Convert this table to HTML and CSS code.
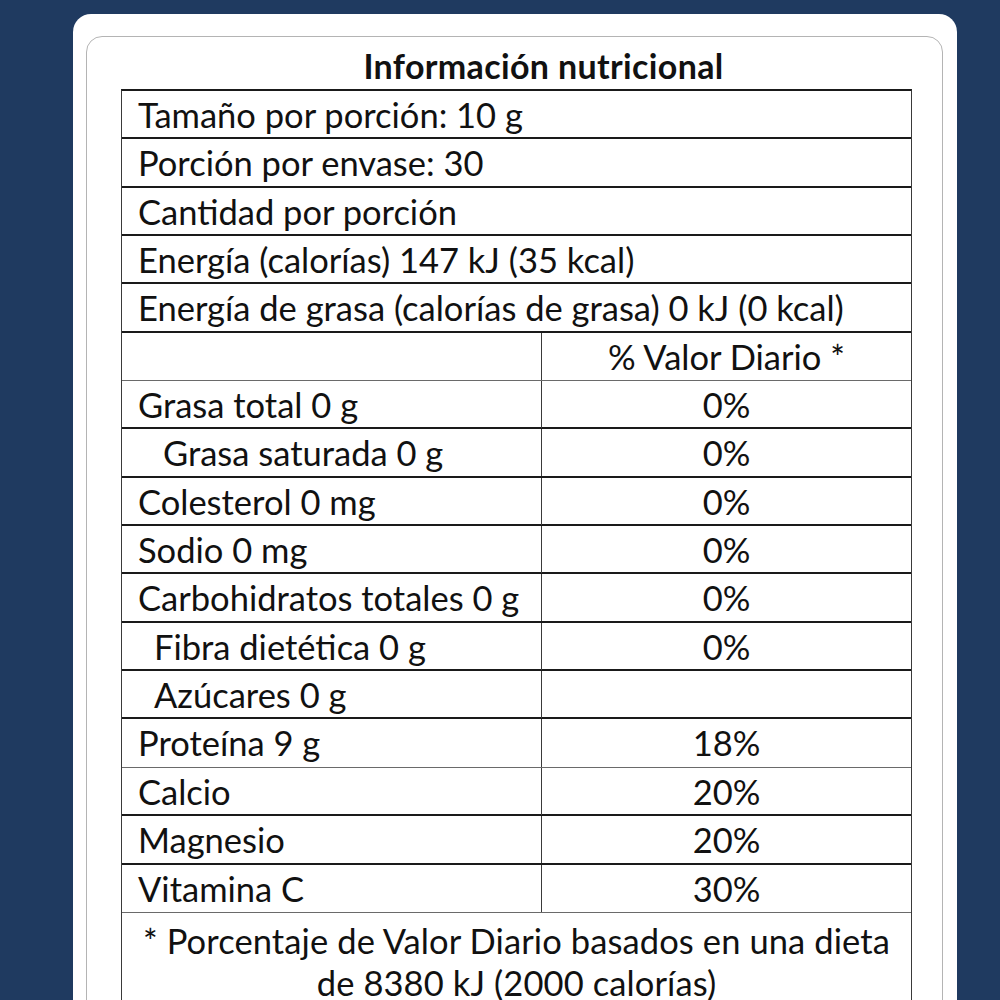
FILE: index.html
```html
<!DOCTYPE html>
<html lang="es">
<head>
<meta charset="utf-8">
<title>Información nutricional</title>
<link rel="stylesheet" href="styles.css">
</head>
<body>
<div class="card">
  <div class="panel">
    <h1 class="title">Información nutricional</h1>
    <div class="facts">
      <div class="row full">Tamaño por porción: 10 g</div>
      <div class="row full">Porción por envase: 30</div>
      <div class="row full">Cantidad por porción</div>
      <div class="row full">Energía (calorías) 147 kJ (35 kcal)</div>
      <div class="row full">Energía de grasa (calorías de grasa) 0 kJ (0 kcal)</div>
      <div class="row split light"><div class="name"></div><div class="val">% Valor Diario *</div></div>
      <div class="row split"><div class="name">Grasa total 0 g</div><div class="val">0%</div></div>
      <div class="row split"><div class="name sub-lg">Grasa saturada 0 g</div><div class="val">0%</div></div>
      <div class="row split"><div class="name">Colesterol 0 mg</div><div class="val">0%</div></div>
      <div class="row split"><div class="name">Sodio 0 mg</div><div class="val">0%</div></div>
      <div class="row split"><div class="name">Carbohidratos totales 0 g</div><div class="val">0%</div></div>
      <div class="row split"><div class="name sub">Fibra dietética 0 g</div><div class="val">0%</div></div>
      <div class="row split"><div class="name sub">Azúcares 0 g</div><div class="val"></div></div>
      <div class="row split light"><div class="name">Proteína 9 g</div><div class="val">18%</div></div>
      <div class="row split"><div class="name">Calcio</div><div class="val">20%</div></div>
      <div class="row split"><div class="name">Magnesio</div><div class="val">20%</div></div>
      <div class="row split light"><div class="name">Vitamina C</div><div class="val">30%</div></div>
      <div class="row note">* Porcentaje de Valor Diario basados en una dieta<br>de 8380 kJ (2000 calorías)</div>
    </div>
  </div>
</div>
</body>
</html>
```

FILE: styles.css
```css
html, body {
  margin: 0;
  padding: 0;
}
body {
  background: #1f3a60;
  font-family: Lato, "Open Sans", sans-serif;
  color: #111;
  height: 1000px;
  overflow: hidden;
}
.card {
  margin: 14px 0 0 73px;
  width: 884px;
  height: 1100px;
  background: #fff;
  border-radius: 18px;
  padding: 22px 14px 0 13px;
  box-sizing: border-box;
}
.panel {
  border: 1px solid #b4b4b4;
  border-radius: 16px;
  height: 1100px;
  padding: 0 30px 0 34px;
}
.title {
  margin: 0;
  height: 52px;
  box-sizing: border-box;
  padding: 11px 0 0 54px;
  text-align: center;
  font-size: 34px;
  font-weight: 700;
  line-height: 36px;
  letter-spacing: 0.35px;
}
.facts {
  border-left: 1.5px solid #3a3a3a;
  border-right: 1.5px solid #3a3a3a;
  border-top: 2px solid #1a1a1a;
  font-size: 34.5px;
}
.row {
  height: 48.35px;
  box-sizing: border-box;
  border-bottom: 2px solid #1a1a1a;
  line-height: 46px;
  white-space: nowrap;
}
.row.light {
  border-bottom: 1.5px solid #6a6a6a;
}
.full {
  padding: 1px 0 0 16px;
}
.split {
  display: grid;
  grid-template-columns: 420px 1fr;
}
.name {
  padding: 1px 0 0 16px;
  border-right: 1.5px solid #3a3a3a;
}
.name.sub {
  padding-left: 32px;
}
.name.sub-lg {
  padding-left: 41px;
}
.val {
  padding-top: 1px;
  text-align: center;
}
.note {
  height: auto;
  border-bottom: none;
  text-align: center;
  line-height: 42px;
  padding-top: 7px;
  white-space: normal;
  letter-spacing: 0.1px;
}
```
